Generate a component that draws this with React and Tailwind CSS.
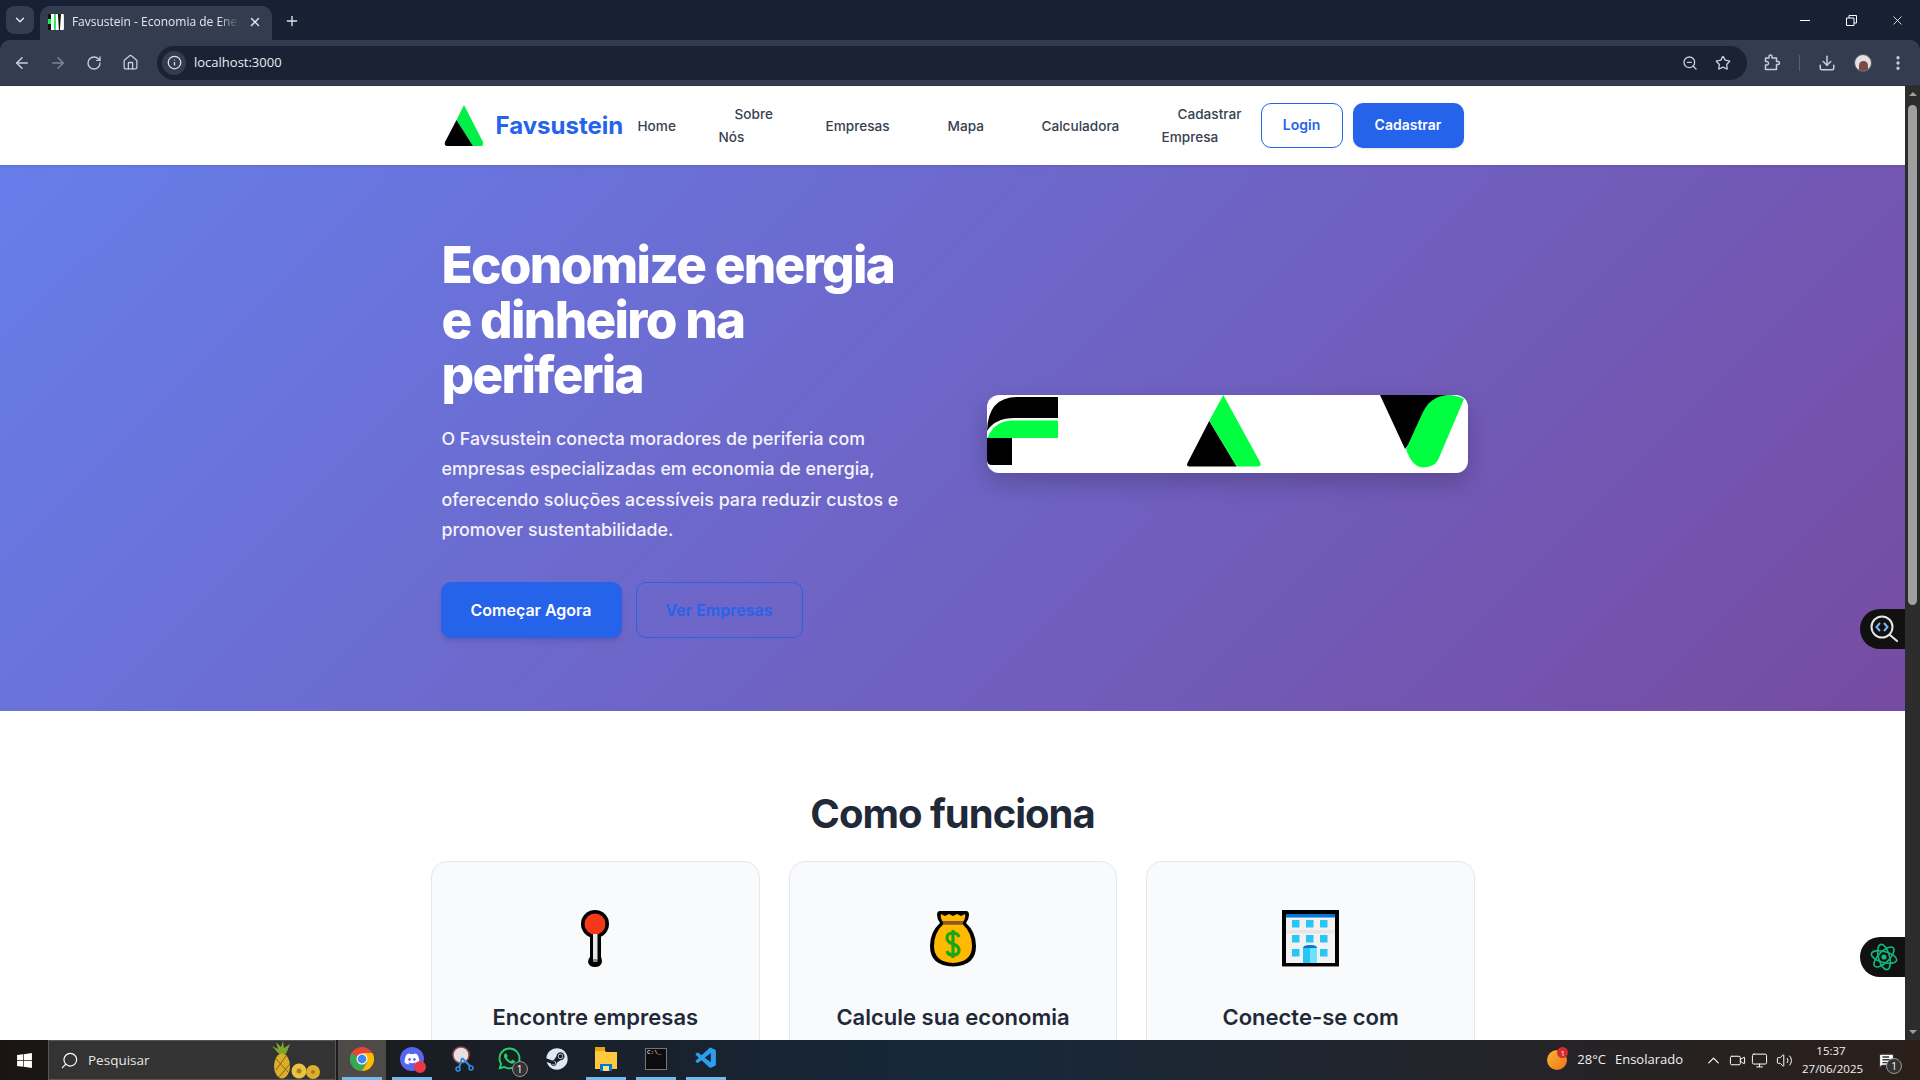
import React from 'react';
import {
  ArrowLeft, ArrowRight, ChevronDown, ChevronUp, Download, Home, Info, MessageSquareText, Monitor,
  MoreVertical, Plus, RotateCw, Search, Star, Video, Volume2, X, ZoomOut,
} from 'lucide-react';
import { FaSteam, FaWhatsapp, FaWindows, FaDiscord } from 'react-icons/fa';
import { VscVscode } from 'react-icons/vsc';

const navLinks = [
  { label: 'Home', className: 'w-[71px] mt-[2px]' },
  { label: 'Sobre Nós', className: 'w-[65px]' },
  { label: 'Empresas', className: 'w-[96px] mt-[2px]' },
  { label: 'Mapa', className: 'w-[68px] mt-[2px]' },
  { label: 'Calculadora', className: 'w-[110px] mt-[2px]' },
  { label: 'Cadastrar Empresa', className: 'w-[95px]' },
];

const TabFavicon = () => (
  <svg width="16" height="16" viewBox="0 0 16 16">
    <rect width="16" height="16" rx="1" fill="#fff" />
    <path d="M0 0h3v16H0z" fill="#111" />
    <path d="M0 5h3v5H0z" fill="#00ff41" />
    <path d="M6 0h2v16H6z" fill="#2fe860" />
    <path d="M10 0h3l-1 16h-1z" fill="#111" />
  </svg>
);

const ExtensionIcon = () => (
  <svg width="17" height="17" viewBox="0 0 17 17" fill="none" stroke="#c5cfdd" strokeWidth="1.5" strokeLinejoin="round">
    <path d="M1.5 4 H5 V2.5 Q5 1 6.5 1 Q8 1 8 2.5 V4 H12.5 V7.5 H14 Q15.5 7.5 15.5 9 Q15.5 10.5 14 10.5 H12.5 V15.5 H1.5 V11 H3 Q4.5 11 4.5 9.3 Q4.5 7.5 3 7.5 H1.5 Z" />
  </svg>
);

const BrandLogo = () => (
  <svg width="40" height="42" viewBox="0 0 40 42" className="ml-[3px] shrink-0">
    <path d="M20 0 L39 37 Q40 41 37 41 L29 41 L12.5 15 Z" fill="#00f048" />
    <path d="M12.5 15 L29 41 L3 41 Q0 41 1 37 Z" fill="#000" />
  </svg>
);

const HeroLogo = () => (
  <div className="w-[481px] h-[78px] -mr-[3px] -mt-[8px] shrink-0 bg-white rounded-[12px] overflow-hidden shadow-[0_10px_25px_rgba(0,0,0,0.2)]">
    <svg width="481" height="77" viewBox="0 0 481 77" className="block">
      <path d="M0 36 Q1 2 30 2 H71 V23 H28 Q8 23 0 36 Z" fill="#000" />
      <path d="M0 43 H25 V70 H5 Q0 70 0 65 Z" fill="#000" />
      <path d="M0.5 43 Q7 26 25 25.5 H71 V43 Z" fill="#00ff41" />
      <path d="M222.3 25.7 L249.7 71.5 H202 Q199 71 200.5 68 Z" fill="#000" />
      <path d="M236.3 0 L273 67 Q275 71.5 271 71.5 H249.7 L222.3 25.7 Z" fill="#00ff41" />
      <path d="M393 0 H462 L418 54 Z" fill="#000" />
      <path d="M477 4 Q470 0 460 0 Q443 2 436 17 L419 54 Q425 72 436 72.5 Q448 72 451.5 64 Z" fill="#00ff41" />
    </svg>
  </div>
);

const PinIcon = () => (
  <svg width="28" height="57" viewBox="0 0 28 57">
    <path d="M9 26 V47 Q7 49 7 52 Q8 57 14 57 Q20 57 21 52 Q21 49 20 47 V26 Z" fill="#000" />
    <circle cx="14" cy="14" r="14" fill="#000" />
    <circle cx="14" cy="14" r="10.5" fill="#f4391a" />
    <rect x="12" y="24" width="4.5" height="26" fill="#e6e6e6" />
    <rect x="12" y="49" width="4.5" height="3" fill="#8a8a8a" />
  </svg>
);

const MoneyBagIcon = () => (
  <svg width="46" height="57" viewBox="0 0 46 57">
    <path d="M10 1 Q7 1 7 5 Q7 9 10 13 Q0 22 0 36 Q0 56 23 56.5 Q46 56 46 36 Q46 22 36 13 Q39 9 39 5 Q39 1 36 1 Z" fill="#000" />
    <path d="M11 4 L15 6 L19 4 L23 6 L27 4 L31 6 L35 4 Q36 8 33 12 H13 Q10 8 11 4 Z" fill="#ffb900" />
    <path d="M13 11 H33 V14.5 H13 Z" fill="#8e562e" />
    <path d="M13 14.5 H33 Q42 23 42 36 Q42 52 23 53 Q4 52 4 36 Q4 23 13 14.5 Z" fill="#ffb900" />
    <path d="M29 27 Q28 23 23 23 Q17 23 17 28 Q17 32 23 34 Q29 36 29 40 Q29 45 23 45 Q18 45 17 41 M23 20 V48" fill="none" stroke="#16a813" strokeWidth="3.2" />
  </svg>
);

const BuildingIcon = () => (
  <svg width="57" height="57" viewBox="0 0 57 57">
    <rect width="57" height="56" fill="#000" />
    <rect y="56" width="57" height="1" fill="#888" />
    <rect x="4" y="4" width="49" height="49" fill="#f2f2f2" />
    <rect x="4" y="4" width="49" height="3.5" fill="#0078d4" />
    <rect x="4" y="20" width="49" height="3.5" fill="#e6e6e6" />
    {[10, 24, 38].map((x) => (
      <React.Fragment key={x}>
        <rect x={x} y="10" width="7.5" height="7.5" fill="#29c5f6" />
        <rect x={x} y="25" width="7.5" height="7.5" fill="#29c5f6" />
      </React.Fragment>
    ))}
    <rect x="10" y="39" width="7.5" height="7.5" fill="#29c5f6" />
    <rect x="38" y="39" width="7.5" height="7.5" fill="#29c5f6" />
    <path d="M21 38 Q21 35 28.5 35 Q35 35 35 38 Z" fill="#0078d4" />
    <rect x="21" y="38" width="7" height="15" fill="#29c5f6" />
    <rect x="28" y="38" width="7" height="15" fill="#6ee2ff" />
  </svg>
);

const ChromeLogo = () => (
  <svg width="24" height="24" viewBox="0 0 24 24">
    <circle cx="12" cy="12" r="12" fill="#ea4335" />
    <path d="M12 12 L1.6 6 A12 12 0 0 0 12 24 L18 13.5 Z" fill="#34a853" />
    <path d="M12 6 H22.4 A12 12 0 0 1 12 24 L17.2 15 Z" fill="#fbbc04" />
    <circle cx="12" cy="12" r="5.5" fill="#fff" />
    <circle cx="12" cy="12" r="4.4" fill="#4285f4" />
  </svg>
);

const Pineapple = () => (
  <svg width="50" height="38" viewBox="0 0 50 38">
    <path d="M8 13 L1 5 L7 8 L5 1 L10 6 L12 0 L13 7 L19 3 L15 13 Z" fill="#7fa52c" />
    <ellipse cx="11" cy="25" rx="8" ry="12.5" fill="#dcae2c" />
    <path d="M5 18 L17 31 M5 29 L15 15 M8 36 L19 23" stroke="#8a6412" strokeWidth="1" />
    <circle cx="28" cy="30" r="7.5" fill="#e8c342" />
    <circle cx="28" cy="30" r="2.5" fill="#a57e1a" />
    <circle cx="42" cy="31" r="7" fill="#dcae2c" />
    <circle cx="42" cy="31" r="2" fill="#a57e1a" />
  </svg>
);

const BrowserChrome = () => (
  <div className="shrink-0 bg-[#172133] font-['Open_Sans',sans-serif]">
    {/* Tab strip */}
    <div className="h-[40px] flex items-end text-white">
      <div className="w-[28px] h-[28px] ml-[6px] mb-[6px] rounded-lg bg-[#333d4f] flex items-center justify-center">
        <ChevronDown size={14} strokeWidth={2.5} className="text-[#dfe4ec]" />
      </div>
      <div className="w-[232px] h-[34px] ml-[6px] rounded-t-[10px] bg-[#333d4f] flex items-center pl-[8px] pr-[10px] pb-[3px]">
        <TabFavicon />
        <span className="ml-[8px] text-[12px] whitespace-nowrap overflow-hidden w-[168px] text-[#e4e8ee] [mask-image:linear-gradient(to_right,#000_88%,transparent)]">Favsustein - Economia de Energia</span>
        <X size={14} strokeWidth={2.5} className="ml-[9px] shrink-0 text-[#dfe4ec]" />
      </div>
      <Plus size={16} strokeWidth={2} className="ml-[12px] mb-[11px] text-[#dfe4ec]" />
      <div className="flex-1" />
      <div className="flex items-center h-full text-white">
        <div className="w-[46px] flex justify-center"><span className="w-[10px] h-px bg-white" /></div>
        <div className="w-[46px] flex justify-center">
          <svg width="11" height="11" viewBox="0 0 11 11" fill="none" stroke="#fff"><path d="M0.5 3 H8 V10.5 H0.5 Z M3 3 V0.5 H10.5 V8 H8" /></svg>
        </div>
        <div className="w-[46px] flex justify-center"><X size={15} strokeWidth={1.3} /></div>
      </div>
    </div>
    {/* Toolbar */}
    <div className="h-[46px] bg-[#333d4f] rounded-t-[10px] flex items-center text-[#c5cfdd] pl-[13px] border-b border-[#2a3240]">
      <ArrowLeft size={18} strokeWidth={2} />
      <ArrowRight size={18} strokeWidth={2} className="ml-[18px] text-[#7c8697]" />
      <RotateCw size={16} strokeWidth={2} className="ml-[19px]" />
      <Home size={17} strokeWidth={1.8} className="ml-[20px]" />
      <div className="ml-[18px] w-[1590px] h-[34px] rounded-full bg-[#1a2234] flex items-center pl-[5px] pr-[16px]">
        <div className="w-[24px] h-[24px] rounded-full bg-[#333d4f] flex items-center justify-center">
          <Info size={15} strokeWidth={2} className="text-[#dfe4ec]" />
        </div>
        <span className="ml-[8px] text-[13px] text-[#e8ecf2]">localhost:3000</span>
        <div className="flex-1" />
        <ZoomOut size={16} strokeWidth={2} />
        <Star size={16} strokeWidth={2} className="ml-[17px]" />
      </div>
      <div className="ml-[17px]"><ExtensionIcon /></div>
      <span className="w-px h-[16px] bg-[#566072] ml-[18px]" />
      <Download size={18} strokeWidth={2} className="ml-[18px]" />
      <div className="ml-[18px] w-[18px] h-[18px] rounded-full bg-[#e8dfe0] flex items-end justify-center overflow-hidden border border-[#555]">
        <span className="w-[9px] h-[10px] bg-[#7a4a48] rounded-t-full" />
      </div>
      <MoreVertical size={18} strokeWidth={2.4} className="ml-[17px]" />
    </div>
  </div>
);

const SiteHeader = () => (
  <header className="h-[79px] bg-white shadow-[0_1px_3px_rgba(0,0,0,0.1)] relative z-10">
    <div className="w-[1024px] h-full mx-auto flex items-center">
      <BrandLogo />
      <span className="ml-[12px] w-[126px] text-[24px] font-bold text-[#2563eb] whitespace-nowrap">Favsustein</span>
      <ul className="flex items-center gap-[26px] w-[639px] text-[13.6px] leading-[23px] font-medium text-[#374151]">
        {navLinks.map((link) => (
          <li key={link.label} className={link.className}>
            <a href="#" className="px-4">{link.label}</a>
          </li>
        ))}
      </ul>
      <div className="flex gap-[10px]">
        <button className="w-[82px] h-[45px] pb-[2px] rounded-[10px] border border-[#2563eb] bg-white text-[14px] font-semibold text-[#2563eb]">Login</button>
        <button className="w-[111px] h-[45px] pb-[2px] rounded-[10px] bg-[#2563eb] text-[14px] font-semibold text-white shadow-sm">Cadastrar</button>
      </div>
    </div>
  </header>
);

const Hero = () => (
  <section className="h-[546px] bg-[linear-gradient(135deg,#667eea_0%,#764ba2_100%)]">
    <div className="w-[1024px] h-full mx-auto flex items-center justify-between">
      <div className="w-[480px] -mt-[2px]">
        <h1 className="pl-px text-[51.2px] leading-[55px] font-extrabold text-white tracking-[-0.033em]">
          Economize energia e dinheiro na periferia
        </h1>
        <p className="pl-px mt-[22px] text-[17.8px] leading-[30.5px] font-medium text-[#f6f3fb]">
          O Favsustein conecta moradores de periferia com empresas especializadas em economia de energia, oferecendo soluções acessíveis para reduzir custos e promover sustentabilidade.
        </p>
        <div className="mt-[36px] flex gap-[14px]">
          <button className="w-[181px] h-[56px] rounded-[10px] bg-[#2563eb] text-[16px] font-semibold text-white shadow-md">Começar Agora</button>
          <button className="w-[167px] h-[56px] rounded-[10px] border border-[#2563eb] text-[16px] font-semibold text-[#2563eb]">Ver Empresas</button>
        </div>
      </div>
      <HeroLogo />
    </div>
  </section>
);

const Features = () => (
  <section className="bg-white pt-[79px]">
    <h2 className="text-[40px] leading-[48px] font-bold text-[#1f2937] text-center tracking-[-0.025em]">Como funciona</h2>
    <div className="w-[1044px] ml-[431px] mt-[23px] grid grid-cols-3 gap-[29px]">
      {[
        { title: 'Encontre empresas', icon: <PinIcon /> },
        { title: 'Calcule sua economia', icon: <MoneyBagIcon /> },
        { title: 'Conecte-se com', icon: <BuildingIcon /> },
      ].map((card) => (
        <div key={card.title} className="h-[300px] bg-[#f8fafc] border border-[#e2e8f0] rounded-[16px] pt-[48px] text-center">
          <div className="h-[57px] flex justify-center">{card.icon}</div>
          <h3 className="mt-[34px] text-[22px] leading-[32px] font-semibold text-[#1f2937]">{card.title}</h3>
        </div>
      ))}
    </div>
  </section>
);

const Scrollbar = () => (
  <div className="w-[15px] shrink-0 bg-[#2c2c2c] flex flex-col items-center">
    <span className="mt-[6px] w-0 h-0 border-x-[4px] border-x-transparent border-b-[4px] border-b-[#9f9f9f]" />
    <span className="mt-[9px] w-[9px] h-[500px] rounded-full bg-[#9f9f9f]" />
    <div className="flex-1" />
    <span className="mb-[6px] w-0 h-0 border-x-[4px] border-x-transparent border-t-[4px] border-t-[#9f9f9f]" />
  </div>
);

const FloatingPills = () => (
  <>
    <div className="absolute right-[15px] top-[523px] w-[45px] h-[40px] rounded-l-full bg-[#111] flex items-center pl-[9px]">
      <svg width="30" height="30" viewBox="0 0 30 30" fill="none">
        <circle cx="13" cy="13" r="10.5" stroke="#e6e6e6" strokeWidth="2" />
        <path d="M21 21 L28 27" stroke="#e6e6e6" strokeWidth="2" strokeLinecap="round" />
        <path d="M11 9 L7.5 13 L11 17 M15 9 L18.5 13 L15 17" stroke="#7db4f5" strokeWidth="2" />
      </svg>
    </div>
    <div className="absolute right-[15px] top-[851px] w-[45px] h-[40px] rounded-l-full bg-[#111] flex items-center pl-[10px]">
      <svg width="28" height="28" viewBox="0 0 28 28" fill="none" stroke="#10b981" strokeWidth="1.6">
        <ellipse cx="14" cy="14" rx="13" ry="5.5" transform="rotate(15 14 14)" />
        <ellipse cx="14" cy="14" rx="13" ry="5.5" transform="rotate(75 14 14)" />
        <ellipse cx="14" cy="14" rx="13" ry="5.5" transform="rotate(135 14 14)" />
        <circle cx="14" cy="14" r="1.8" fill="#10b981" />
      </svg>
    </div>
  </>
);

const TaskIcon = ({ children, open, active, width = 'w-[50px]' }) => (
  <div className={`${width} h-full flex flex-col items-center ${active ? 'bg-[#4d4a48]' : ''}`}>
    <div className="flex-1 flex items-center justify-center">{children}</div>
    <span className={`h-[3px] ${open ? 'w-[40px] bg-[#76b9ed]' : 'w-0'}`} />
  </div>
);

const Taskbar = () => (
  <div className="h-[40px] shrink-0 flex items-center text-white font-['Open_Sans',sans-serif] bg-linear-to-r from-[#1a1512] via-[#16283a] to-[#2b1f1a]">
    <div className="w-[48px] flex justify-center"><FaWindows size={17} /></div>
    <div className="w-[288px] h-full bg-[#333] border border-[#555] flex items-center pl-[11px] overflow-hidden">
      <Search size={19} strokeWidth={1.5} className="-scale-x-100" />
      <span className="ml-[9px] text-[13.5px] text-[#e6e6e6]">Pesquisar</span>
      <div className="flex-1" />
      <Pineapple />
      <div className="w-[14px]" />
    </div>
    <div className="w-[2px]" />
    <div className="h-full flex">
      <TaskIcon active open width="w-[48px]"><ChromeLogo /></TaskIcon>
      <TaskIcon open width="w-[52px]">
        <div className="relative w-[24px] h-[24px] rounded-full bg-[#5865f2] flex items-center justify-center">
          <FaDiscord size={16} />
          <span className="absolute -right-[2px] -bottom-[2px] w-[12px] h-[12px] rounded-full bg-[#e63946] border-[3px] border-[#e63946]" />
        </div>
      </TaskIcon>
      <TaskIcon width="w-[47px]">
        <svg width="24" height="26" viewBox="0 0 24 26">
          <circle cx="11" cy="9" r="8" fill="#e6e1e1" stroke="#9c4a4a" strokeWidth="1.5" />
          <path d="M12 12 L9 22 M12 12 L20 20" stroke="#2f8fe8" strokeWidth="2" />
          <circle cx="8" cy="23" r="2" fill="none" stroke="#2f8fe8" strokeWidth="1.5" />
          <circle cx="21" cy="22" r="2" fill="none" stroke="#2f8fe8" strokeWidth="1.5" />
        </svg>
      </TaskIcon>
      <TaskIcon width="w-[48px]">
        <div className="relative">
          <FaWhatsapp size={25} className="text-[#25d366]" />
          <span className="absolute -right-[6px] -bottom-[6px] w-[16px] h-[16px] rounded-full bg-[#333] border border-[#999] text-[10px] leading-[14px] text-center">1</span>
        </div>
      </TaskIcon>
      <TaskIcon width="w-[48px]"><FaSteam size={22} className="text-[#dfe9f5]" /></TaskIcon>
      <TaskIcon open width="w-[50px]">
        <svg width="22" height="24" viewBox="0 0 22 24">
          <path d="M0 2 H9 L11 5 H22 V22 H0 Z" fill="#ffc83d" />
          <path d="M0 0 H10 V4 H0 Z" fill="#e8a317" />
          <rect x="5" y="17" width="12" height="7" fill="#0078d4" />
          <rect x="8" y="19" width="6" height="5" fill="#ffe08a" />
        </svg>
      </TaskIcon>
      <TaskIcon open width="w-[50px]">
        <div className="w-[22px] h-[22px] bg-[#0c0c0c] border border-[#777] text-[6px] leading-[8px] pl-[1px] font-['Liberation_Mono',monospace]">C:\_</div>
      </TaskIcon>
      <TaskIcon open width="w-[50px]"><VscVscode size={25} className="text-[#2a9ff0]" /></TaskIcon>
    </div>
    <div className="flex-1" />
    <div className="relative w-[20px] h-[20px] rounded-full bg-linear-to-br from-[#f7b733] to-[#f0701c]">
      <span className="absolute -right-[1px] -top-[3px] w-[11px] h-[11px] rounded-full bg-[#d62b2b] text-[8px] leading-[11px] text-center">1</span>
    </div>
    <span className="ml-[10px] text-[13px] text-[#f0f0f0]">28°C</span>
    <span className="ml-[9px] text-[13px] text-[#f0f0f0]">Ensolarado</span>
    <ChevronUp size={19} strokeWidth={1.5} className="ml-[21px]" />
    <Video size={17} strokeWidth={1.4} className="ml-[6px]" />
    <Monitor size={17} strokeWidth={1.4} className="ml-[5px]" />
    <Volume2 size={17} strokeWidth={1.4} className="ml-[8px]" />
    <div className="ml-[9px] w-[58px] text-center text-[11.5px] leading-[18px] text-[#f0f0f0]">
      <div>15:37</div>
      <div className="whitespace-nowrap">27/06/2025</div>
    </div>
    <div className="ml-[18px] mr-[25px] relative">
      <MessageSquareText size={17} fill="#fff" className="text-[#333]" />
      <span className="absolute -right-[7px] -bottom-[5px] w-[16px] h-[16px] rounded-full bg-[#333] border border-[#999] text-[10px] leading-[14px] text-center">1</span>
    </div>
  </div>
);

export default function App() {
  return (
    <div className="h-screen flex flex-col overflow-hidden bg-white font-['Inter',sans-serif]">
      <BrowserChrome />
      <div className="flex-1 min-h-0 flex relative">
        <main className="flex-1 min-w-0 overflow-hidden">
          <SiteHeader />
          <Hero />
          <Features />
        </main>
        <Scrollbar />
        <FloatingPills />
      </div>
      <Taskbar />
    </div>
  );
}
